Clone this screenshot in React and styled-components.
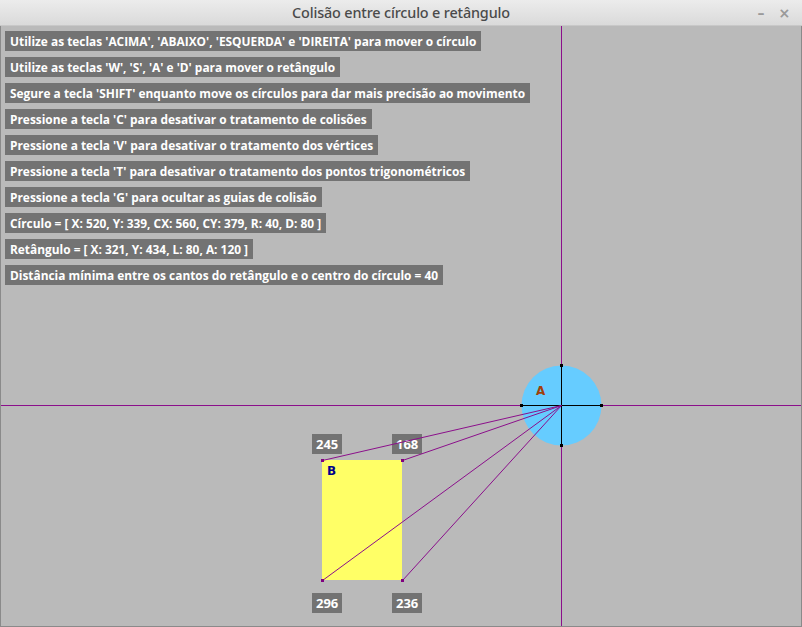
import React from "react";
import styled, { createGlobalStyle } from "styled-components";

const Global = createGlobalStyle`
  html, body { margin: 0; padding: 0; background: #bababa; }
  body { width: 802px; height: 627px; overflow: hidden; }
`;

const Window = styled.div`
  width: 802px;
  height: 627px;
  box-sizing: border-box;
  display: flex;
  flex-direction: column;
  border: 1px solid #8a8a8a;
  border-top: none;
  background: #bababa;
`;

const TitleBar = styled.div`
  height: 26px;
  flex: none;
  margin: 0 -1px;
  display: flex;
  align-items: center;
  justify-content: center;
  position: relative;
  background: linear-gradient(#ececec, #dadada);
  border-bottom: 1px solid #c8c8c8;
  box-sizing: border-box;
  font-family: "Noto Sans", sans-serif;
  font-size: 14.4px;
  font-weight: 500;
  color: #4a4a4a;
  letter-spacing: -0.15px;
`;

const Controls = styled.div`
  position: absolute;
  right: 12px;
  top: 0;
  height: 26px;
  display: flex;
  align-items: center;
  gap: 14px;
  color: #9a9a9a;
  font-family: "DejaVu Sans", sans-serif;
  font-size: 14px;
  font-weight: bold;
`;

const Canvas = styled.div`
  position: relative;
  width: 800px;
  height: 600px;
  background: #bababa;
  overflow: hidden;
`;

const InfoList = styled.div`
  position: relative;
  z-index: 2;
  display: flex;
  flex-direction: column;
  align-items: flex-start;
  gap: 6px;
  padding: 5px 0 0 4px;
`;

const Label = styled.div`
  background: #737373;
  color: #ffffff;
  font-family: "Open Sans", sans-serif;
  font-weight: bold;
  font-size: 11.9px;
  line-height: 20px;
  height: 20px;
  padding: 0 5px;
  white-space: nowrap;
`;

const CornerLabel = styled(Label)`
  position: absolute;
  z-index: 0;
  font-size: 13px;
  height: 20px;
  line-height: 20px;
  padding: 0 4px;
`;

const Drawing = styled.svg`
  position: absolute;
  z-index: 1;
  left: 0;
  top: 0;
`;

const lines = [
  "Utilize as teclas 'ACIMA', 'ABAIXO', 'ESQUERDA' e 'DIREITA' para mover o círculo",
  "Utilize as teclas 'W', 'S', 'A' e 'D' para mover o retângulo",
  "Segure a tecla 'SHIFT' enquanto move os círculos para dar mais precisão ao movimento",
  "Pressione a tecla 'C' para desativar o tratamento de colisões",
  "Pressione a tecla 'V' para desativar o tratamento dos vértices",
  "Pressione a tecla 'T' para desativar o tratamento dos pontos trigonométricos",
  "Pressione a tecla 'G' para ocultar as guias de colisão",
  "Círculo = [ X: 520, Y: 339, CX: 560, CY: 379, R: 40, D: 80 ]",
  "Retângulo = [ X: 321, Y: 434, L: 80, A: 120 ]",
  "Distância mínima entre os cantos do retângulo e o centro do círculo = 40",
];

const cx = 560, cy = 379, r = 40;
const rect = { x: 321, y: 434, w: 80, h: 120 };
const corners = [
  [rect.x, rect.y],
  [rect.x + rect.w, rect.y],
  [rect.x, rect.y + rect.h],
  [rect.x + rect.w, rect.y + rect.h],
];
const dist = (p) => Math.round(Math.hypot(p[0] - cx, p[1] - cy));
const PURPLE = "#8b0f8b";

export default function App() {
  return (
    <>
      <Global />
      <Window>
        <TitleBar>
          Colisão entre círculo e retângulo
          <Controls>
            <span>–</span>
            <span>×</span>
          </Controls>
        </TitleBar>
        <Canvas>
          {corners.map((p, i) => (
            <CornerLabel
              key={"l" + i}
              style={{ left: p[0] - 10, top: i < 2 ? p[1] - 26 : p[1] + 13 }}
            >
              {dist(p)}
            </CornerLabel>
          ))}
          <Drawing width="800" height="600" viewBox="0 0 800 600">
            <line x1="0" y1={cy + 0.5} x2="800" y2={cy + 0.5} stroke={PURPLE} strokeWidth="1" />
            <line x1={cx + 0.5} y1="0" x2={cx + 0.5} y2="600" stroke={PURPLE} strokeWidth="1" />
            <circle cx={cx + 0.5} cy={cy + 0.5} r={r} fill="#66ccff" />
            <line x1={cx - r} y1={cy + 0.5} x2={cx + r} y2={cy + 0.5} stroke="#000" strokeWidth="1" />
            <line x1={cx + 0.5} y1={cy - r} x2={cx + 0.5} y2={cy + r} stroke="#000" strokeWidth="1" />
            {[[cx, cy - r], [cx - r, cy], [cx + r, cy], [cx, cy + r]].map(([x, y], i) => (
              <rect key={i} x={x - 1} y={y - 1} width="3" height="3" fill="#000" />
            ))}
            <text x="535" y="369" fill="#a0400a" fontFamily="'DejaVu Sans', sans-serif" fontWeight="bold" fontSize="12">A</text>
            <rect x={rect.x} y={rect.y} width={rect.w} height={rect.h} fill="#ffff66" />
            <text x="326" y="449" fill="#00008b" fontFamily="'DejaVu Sans', sans-serif" fontWeight="bold" fontSize="12">B</text>
            {corners.map(([x, y], i) => (
              <line key={i} x1={cx + 0.5} y1={cy + 0.5} x2={x + 0.5} y2={y + 0.5} stroke={PURPLE} strokeWidth="1" />
            ))}
            {corners.map(([x, y], i) => (
              <rect key={"c" + i} x={x - 1} y={y - 1} width="3" height="3" fill="#800080" />
            ))}
          </Drawing>
          <InfoList>
            {lines.map((t) => (
              <Label key={t}>{t}</Label>
            ))}
          </InfoList>
        </Canvas>
      </Window>
    </>
  );
}
